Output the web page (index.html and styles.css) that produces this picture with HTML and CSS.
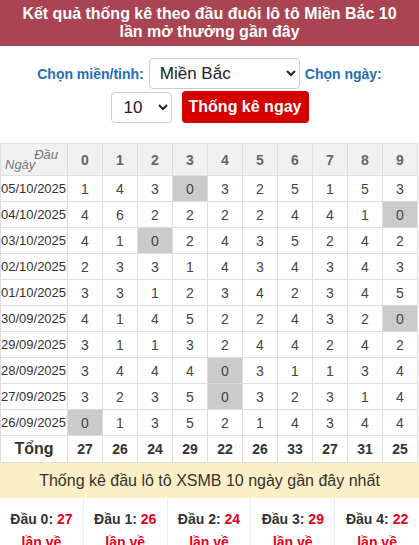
FILE: index.html
```html
<!DOCTYPE html>
<html lang="vi">
<head>
<meta charset="utf-8">
<title>Thống kê đầu đuôi lô tô Miền Bắc</title>
<link rel="stylesheet" href="styles.css">
</head>
<body>
<h1 class="title">Kết quả thống kê theo đầu đuôi lô tô Miền Bắc 10 lần mở thưởng gần đây</h1>
<form class="filter">
  <label class="lbl" for="mien">Chọn miền/tỉnh:</label>
  <select id="mien" class="sel sel-mien"><option>Miền Bắc</option></select>
  <label class="lbl" for="ngay">Chọn ngày:</label>
  <select id="ngay" class="sel sel-ngay"><option>10</option></select>
  <button type="button" class="btn">Thống kê ngay</button>
</form>
<table class="stats">
  <colgroup><col class="c-date"><col span="10"></colgroup>
  <thead>
    <tr>
      <th class="corner"><span class="dau">Đầu</span><span class="ngay">Ngày</span></th>
      <th>0</th><th>1</th><th>2</th><th>3</th><th>4</th><th>5</th><th>6</th><th>7</th><th>8</th><th>9</th>
    </tr>
  </thead>
  <tbody>
    <tr><td class="d">05/10/2025</td><td>1</td><td>4</td><td>3</td><td class="z">0</td><td>3</td><td>2</td><td>5</td><td>1</td><td>5</td><td>3</td></tr>
    <tr><td class="d">04/10/2025</td><td>4</td><td>6</td><td>2</td><td>2</td><td>2</td><td>2</td><td>4</td><td>4</td><td>1</td><td class="z">0</td></tr>
    <tr><td class="d">03/10/2025</td><td>4</td><td>1</td><td class="z">0</td><td>2</td><td>4</td><td>3</td><td>5</td><td>2</td><td>4</td><td>2</td></tr>
    <tr><td class="d">02/10/2025</td><td>2</td><td>3</td><td>3</td><td>1</td><td>4</td><td>3</td><td>4</td><td>3</td><td>4</td><td>3</td></tr>
    <tr><td class="d">01/10/2025</td><td>3</td><td>3</td><td>1</td><td>2</td><td>3</td><td>4</td><td>2</td><td>3</td><td>4</td><td>5</td></tr>
    <tr><td class="d">30/09/2025</td><td>4</td><td>1</td><td>4</td><td>5</td><td>2</td><td>2</td><td>4</td><td>3</td><td>2</td><td class="z">0</td></tr>
    <tr><td class="d">29/09/2025</td><td>3</td><td>1</td><td>1</td><td>3</td><td>2</td><td>4</td><td>4</td><td>2</td><td>4</td><td>2</td></tr>
    <tr><td class="d">28/09/2025</td><td>3</td><td>4</td><td>4</td><td>4</td><td class="z">0</td><td>3</td><td>1</td><td>1</td><td>3</td><td>4</td></tr>
    <tr><td class="d">27/09/2025</td><td>3</td><td>2</td><td>3</td><td>5</td><td class="z">0</td><td>3</td><td>2</td><td>3</td><td>1</td><td>4</td></tr>
    <tr><td class="d">26/09/2025</td><td class="z">0</td><td>1</td><td>3</td><td>5</td><td>2</td><td>1</td><td>4</td><td>3</td><td>4</td><td>4</td></tr>
  </tbody>
  <tfoot>
    <tr><th class="tong">Tổng</th><th>27</th><th>26</th><th>24</th><th>29</th><th>22</th><th>26</th><th>33</th><th>27</th><th>31</th><th>25</th></tr>
  </tfoot>
</table>
<div class="band">Thống kê đầu lô tô XSMB 10 ngày gần đây nhất</div>
<div class="summary">
  <div class="cell"><b>Đầu 0: <em>27</em></b><em>lần về</em></div>
  <div class="cell"><b>Đầu 1: <em>26</em></b><em>lần về</em></div>
  <div class="cell"><b>Đầu 2: <em>24</em></b><em>lần về</em></div>
  <div class="cell"><b>Đầu 3: <em>29</em></b><em>lần về</em></div>
  <div class="cell"><b>Đầu 4: <em>22</em></b><em>lần về</em></div>
</div>
</body>
</html>
```
FILE: styles.css
```css
* { box-sizing: border-box; }
body {
  margin: 0;
  font-family: Arial, "Liberation Sans", sans-serif;
  color: #333;
  background: #fff;
}
.title {
  margin: 0;
  background: #a94452;
  color: #fff;
  font-size: 16px;
  font-weight: bold;
  line-height: 18px;
  text-align: center;
  padding: 5px 10px;
}
.filter {
  display: flex;
  flex-wrap: wrap;
  justify-content: center;
  align-items: center;
  column-gap: 5px;
  row-gap: 2px;
  margin: 12px 0 20px;
  padding: 0 20px;
}
.lbl {
  font-size: 14px;
  font-weight: bold;
  color: #1d6fb8;
}
.sel {
  height: 31px;
  border: 1px solid #ccc;
  border-radius: 4px;
  background: #fff;
  font-family: Arial, "Liberation Sans", sans-serif;
  font-size: 17px;
  color: #222;
  padding: 0 6px;
}
.sel-mien { width: 151px; }
.sel-ngay { width: 61px; padding-left: 8px; }
.btn {
  margin-left: 5px;
  height: 32px;
  width: 127px;
  padding: 0;
  border: none;
  border-radius: 4px;
  background: #d50000;
  color: #fff;
  font-family: Arial, "Liberation Sans", sans-serif;
  font-size: 16px;
  font-weight: bold;
}
.stats {
  width: 418px;
  border-collapse: collapse;
  table-layout: fixed;
  font-size: 14px;
}
.c-date { width: 67px; }
.stats th, .stats td {
  border: 1px solid #ddd;
  text-align: center;
  padding: 0;
  height: 26px;
  color: #444;
}
.stats thead th {
  height: 32px;
  background: #f1f1f1;
  color: #666;
  font-weight: bold;
}
.stats thead tr th { border-top-color: #ddd; }
.stats .corner {
  position: relative;
  font-weight: normal;
  font-style: italic;
  font-size: 13px;
  color: #777;
}
.corner .dau { position: absolute; right: 9px; top: 3px; }
.corner .ngay { position: absolute; left: 4px; bottom: 3px; }
.stats td.d {
  font-size: 13px;
  text-align: right;
  padding-right: 3px;
  white-space: nowrap;
  color: #333;
}
.stats td.z { background: #cbcbcb; }
.stats tfoot th {
  height: 27px;
  font-weight: bold;
  color: #333;
}
.stats tfoot .tong { font-size: 16px; }
.band {
  background: #fcefc5;
  height: 35px;
  line-height: 35px;
  text-align: center;
  font-size: 16px;
  color: #333;
}
.summary {
  display: grid;
  grid-template-columns: repeat(5, 1fr);
}
.summary .cell {
  border-right: 1px solid #eee;
  display: flex;
  flex-direction: column;
  align-items: center;
  padding-top: 10px;
  font-size: 14px;
  line-height: 23px;
}
.summary .cell:last-child { border-right: none; }
.summary b { color: #333; }
.summary em {
  font-style: normal;
  font-weight: bold;
  color: #e3001b;
}
```
